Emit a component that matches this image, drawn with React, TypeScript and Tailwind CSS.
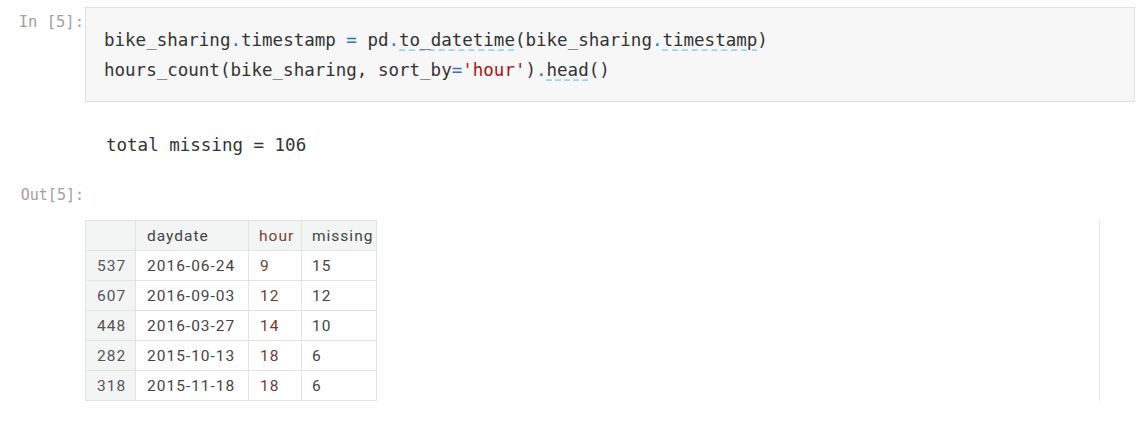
import React from 'react';

const rows = [
  { idx: '537', date: '2016-06-24', hour: '9', missing: '15' },
  { idx: '607', date: '2016-09-03', hour: '12', missing: '12' },
  { idx: '448', date: '2016-03-27', hour: '14', missing: '10' },
  { idx: '282', date: '2015-10-13', hour: '18', missing: '6' },
  { idx: '318', date: '2015-11-18', hour: '18', missing: '6' },
];

const mono = "font-['DejaVu_Sans_Mono','Liberation_Mono',monospace]";

const Op = ({ children }: { children: React.ReactNode }) => (
  <span className="text-[#2f6fd6]">{children}</span>
);

const Hint = ({ children }: { children: React.ReactNode }) => (
  <span className="underline decoration-dashed decoration-[#9fd3f5] underline-offset-[4px]">{children}</span>
);

export default function App() {
  return (
    <div className="w-[1136px] h-[437px] bg-white overflow-hidden">
      {/* input cell */}
      <div className="flex pt-[7px]">
        <div className={`w-[85px] shrink-0 pr-[1px] pt-[3px] text-right text-[15.5px] leading-[24px] text-[#a0a0a0] ${mono}`}>
          In [5]:
        </div>
        <div
          className={`flex-1 mr-[1px] border border-[#e0e0e0] bg-[#f7f7f7] pl-[18px] pt-[17px] pb-[16px] text-[17.5px] leading-[30px] text-[#333] ${mono} whitespace-pre`}
        >
          <div>
            bike_sharing<Op>.</Op>timestamp <Op>=</Op> pd<Op>.</Op><Hint>to_datetime</Hint>(bike_sharing<Op>.</Op><Hint>timestamp</Hint>)
          </div>
          <div>
            hours_count(bike_sharing, sort_by<Op>=</Op><span className="text-[#a11]">'hour'</span>)<Op>.</Op><Hint>head</Hint>()
          </div>
        </div>
      </div>

      {/* stream output */}
      <div className={`pl-[106px] pt-[28px] text-[17.5px] leading-[30px] text-[#333] ${mono} whitespace-pre`}>
        total missing = 106
      </div>

      {/* execute result */}
      <div className="flex pt-[23px]">
        <div className={`w-[85px] shrink-0 pr-[1px] text-right text-[15px] leading-[24px] text-[#a0a0a0] ${mono}`}>
          Out[5]:
        </div>
      </div>
      <div className="flex pt-[13px]">
        <div className="w-[85px] shrink-0" />
        <div className="w-[1015px] border-r border-[#e8e8e8]">
          <table className="w-[291px] table-fixed border-collapse font-['Roboto',sans-serif] text-[15.5px] tracking-[1px] text-[#444]">
            <colgroup>
              <col className="w-[50px]" />
              <col className="w-[113px]" />
              <col className="w-[53px]" />
              <col className="w-[75px]" />
            </colgroup>
            <thead>
              <tr className="h-[30px] bg-[#f3f4f4]">
                <th className="border border-[#e3e3e3] px-[11px] pt-[2px] text-left font-normal"></th>
                <th className="border border-[#e3e3e3] px-[11px] pt-[2px] text-left font-normal">daydate</th>
                <th className="border border-[#e3e3e3] px-[10px] pt-[2px] text-left font-normal text-[#6e4638]">hour</th>
                <th className="border border-[#e3e3e3] px-[10px] pt-[2px] text-left font-normal">missing</th>
              </tr>
            </thead>
            <tbody>
              {rows.map((r) => (
                <tr key={r.idx} className="h-[30px]">
                  <td className="border border-[#e3e3e3] bg-[#f3f4f4] px-[11px] pt-[2px] text-left text-[#555]">{r.idx}</td>
                  <td className="border border-[#e3e3e3] px-[11px] pt-[2px] text-left">{r.date}</td>
                  <td className="border border-[#e3e3e3] px-[11px] pt-[2px] text-left text-[#6e3a30]">{r.hour}</td>
                  <td className="border border-[#e3e3e3] px-[10px] pt-[2px] text-left">{r.missing}</td>
                </tr>
              ))}
            </tbody>
          </table>
        </div>
      </div>
    </div>
  );
}
